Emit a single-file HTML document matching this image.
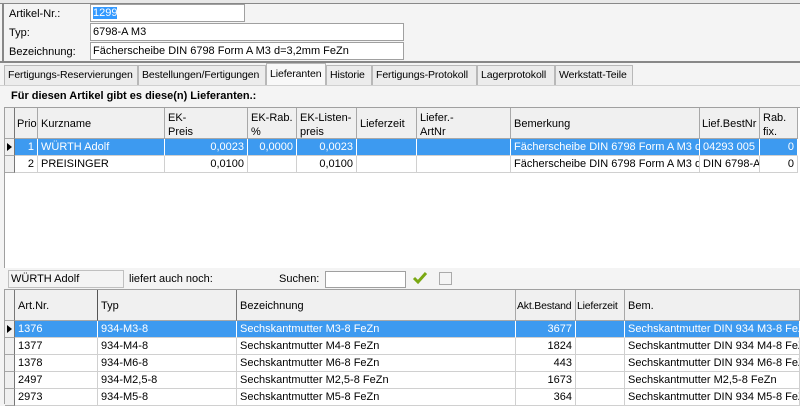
<!DOCTYPE html>
<html><head><meta charset="utf-8"><style>
*{box-sizing:border-box;margin:0;padding:0}
body{width:800px;height:404px;overflow:hidden;background:#f4f4f4;font-family:"Liberation Sans",sans-serif;font-size:11px;color:#000;position:relative}
.a{position:absolute;white-space:nowrap;overflow:hidden}
.inp{position:absolute;background:#fff;border:1px solid #a0a0a0;padding:0 3px;line-height:16px;white-space:nowrap;overflow:hidden}
.tab{position:absolute;top:65px;height:20px;border:1px solid #b8b8b8;border-bottom:none;background:#ececec;padding:3px 3px;white-space:nowrap;font-size:10.5px;letter-spacing:-0.1px;overflow:hidden}
.hd{position:absolute;background:#f0f0f0;border-right:1px solid #a8a8a8;border-bottom:1px solid #a8a8a8;padding:3px 3px;line-height:14px;white-space:nowrap;overflow:hidden}
.c{position:absolute;height:17px;border-right:1px solid #d0d0d0;border-bottom:1px solid #d0d0d0;padding:2px 3px;line-height:13px;white-space:nowrap;overflow:hidden;background:#fff}
.s{background:#3d9af0;color:#fff;border-right-color:#fff}
.r{text-align:right}
.ind{position:absolute;background:#f0f0f0;border-right:1px solid #777;border-bottom:1px solid #a8a8a8}
.tri{position:absolute;left:2px;top:4px;width:0;height:0;border-top:4px solid transparent;border-bottom:4px solid transparent;border-left:5px solid #000}
</style></head><body>
<div class="a" style="left:0;top:0;width:800px;height:3px;background:#e8e8e8"></div>
<div class="a" style="left:0;top:3px;width:800px;height:1px;background:#888"></div>
<div class="a" style="left:2px;top:4px;width:2px;height:58px;background:#888"></div>
<div class="a" style="left:9px;top:8px">Artikel-Nr.:</div>
<div class="inp" style="left:90px;top:4px;width:155px;height:18px;padding:0 2px"><span style="background:#3399ff;color:#fff">1299</span></div>
<div class="a" style="left:9px;top:27px">Typ:</div>
<div class="inp" style="left:90px;top:23px;width:314px;height:18px;padding:0 2px">6798-A M3</div>
<div class="a" style="left:9px;top:46px">Bezeichnung:</div>
<div class="inp" style="left:90px;top:42px;width:314px;height:18px;padding:0 2px">Fächerscheibe DIN 6798 Form A M3 d=3,2mm FeZn</div>
<div class="a" style="left:0;top:61px;width:800px;height:2px;background:#888"></div>

<div class="tab" style="left:4px;width:134px">Fertigungs-Reservierungen</div>
<div class="tab" style="left:138px;width:128px">Bestellungen/Fertigungen</div>
<div class="tab" style="left:266px;top:63px;height:23px;width:60px;background:#f8f8f8;padding-top:4px">Lieferanten</div>
<div class="tab" style="left:326px;width:46px">Historie</div>
<div class="tab" style="left:372px;width:105px">Fertigungs-Protokoll</div>
<div class="tab" style="left:477px;width:78px">Lagerprotokoll</div>
<div class="tab" style="left:555px;width:78px">Werkstatt-Teile</div>
<div class="a" style="left:0;top:85px;width:800px;height:1px;background:#d0d0d0"></div>

<div class="a" style="left:11px;top:90px;font-weight:bold">Für diesen Artikel gibt es diese(n) Lieferanten.:</div>

<div class="a" style="left:4px;top:107px;width:796px;height:161px;background:#fff;border-left:1px solid #a0a0a0;border-top:1px solid #a0a0a0"></div>
<div class="ind" style="left:5px;top:108px;width:10px;height:31px"></div>
<div class="hd" style="left:15px;top:108px;width:23px;height:31px;padding-top:9px;padding-left:2px">Prio</div>
<div class="hd" style="left:38px;top:108px;width:127px;height:31px;padding-top:9px">Kurzname</div>
<div class="hd" style="left:165px;top:108px;width:83px;height:31px">EK-<br>Preis</div>
<div class="hd" style="left:248px;top:108px;width:49px;height:31px">EK-Rab.<br>%</div>
<div class="hd" style="left:297px;top:108px;width:60px;height:31px">EK-Listen-<br>preis</div>
<div class="hd" style="left:357px;top:108px;width:60px;height:31px;padding-top:9px">Lieferzeit</div>
<div class="hd" style="left:417px;top:108px;width:94px;height:31px">Liefer.-<br>ArtNr</div>
<div class="hd" style="left:511px;top:108px;width:189px;height:31px;padding-top:9px">Bemerkung</div>
<div class="hd" style="left:700px;top:108px;width:60px;height:31px;padding-top:9px;padding-left:2px">Lief.BestNr</div>
<div class="hd" style="left:760px;top:108px;width:38px;height:31px">Rab.<br>fix.</div>

<div class="ind" style="left:5px;top:139px;width:10px;height:17px"><div class="tri"></div></div>
<div class="c s r" style="left:15px;top:139px;width:23px">1</div>
<div class="c s" style="left:38px;top:139px;width:127px">WÜRTH Adolf</div>
<div class="c s r" style="left:165px;top:139px;width:83px">0,0023</div>
<div class="c s r" style="left:248px;top:139px;width:49px">0,0000</div>
<div class="c s r" style="left:297px;top:139px;width:60px">0,0023</div>
<div class="c s" style="left:357px;top:139px;width:60px"></div>
<div class="c s" style="left:417px;top:139px;width:94px"></div>
<div class="c s" style="left:511px;top:139px;width:189px">Fächerscheibe DIN 6798 Form A M3 d=3,2mm</div>
<div class="c s" style="left:700px;top:139px;width:60px">04293 005</div>
<div class="c s r" style="left:760px;top:139px;width:38px">0</div>

<div class="ind" style="left:5px;top:156px;width:10px;height:17px"></div>
<div class="c r" style="left:15px;top:156px;width:23px">2</div>
<div class="c" style="left:38px;top:156px;width:127px">PREISINGER</div>
<div class="c r" style="left:165px;top:156px;width:83px">0,0100</div>
<div class="c r" style="left:248px;top:156px;width:49px"></div>
<div class="c r" style="left:297px;top:156px;width:60px">0,0100</div>
<div class="c" style="left:357px;top:156px;width:60px"></div>
<div class="c" style="left:417px;top:156px;width:94px"></div>
<div class="c" style="left:511px;top:156px;width:189px">Fächerscheibe DIN 6798 Form A M3 d=3,2mm</div>
<div class="c" style="left:700px;top:156px;width:60px">DIN 6798-A3</div>
<div class="c r" style="left:760px;top:156px;width:38px">0</div>

<div class="inp" style="left:8px;top:270px;width:116px;height:18px;padding:0 2px;background:#f4f4f4;border-color:#c0c0c0">WÜRTH Adolf</div>
<div class="a" style="left:129px;top:273px">liefert auch noch:</div>
<div class="a" style="left:279px;top:273px">Suchen:</div>
<div class="inp" style="left:325px;top:271px;width:81px;height:17px"></div>
<svg class="a" style="left:412px;top:271px" width="16" height="14" viewBox="0 0 16 14"><path d="M2 7 L6 11 L14 2" stroke="#7aa813" stroke-width="3" fill="none"/></svg>
<div class="a" style="left:439px;top:272px;width:13px;height:13px;border:1px solid #aaa;background:#f4f4f4"></div>

<div class="a" style="left:4px;top:289px;width:796px;height:115px;background:#fff;border-left:1px solid #a0a0a0;border-top:1px solid #a0a0a0"></div>
<div class="ind" style="left:5px;top:290px;width:10px;height:31px"></div>
<div class="hd" style="left:15px;top:290px;width:83px;height:31px;padding-top:9px;border-right-color:#555">Art.Nr.</div>
<div class="hd" style="left:98px;top:290px;width:139px;height:31px;padding-top:9px;border-right-color:#777">Typ</div>
<div class="hd" style="left:237px;top:290px;width:279px;height:31px;padding-top:9px">Bezeichnung</div>
<div class="hd" style="left:516px;top:290px;width:60px;height:31px;padding-top:9px;padding-left:1px;font-size:10.5px;letter-spacing:-0.2px">Akt.Bestand</div>
<div class="hd" style="left:576px;top:290px;width:49px;height:31px;padding-top:9px;padding-left:1px;font-size:10.5px;letter-spacing:-0.2px">Lieferzeit</div>
<div class="hd" style="left:625px;top:290px;width:175px;height:31px;padding-top:9px">Bem.</div>

<div class="ind" style="left:5px;top:321px;width:10px;height:17px"><div class="tri"></div></div>
<div class="c s" style="left:15px;top:321px;width:83px">1376</div>
<div class="c s" style="left:98px;top:321px;width:139px">934-M3-8</div>
<div class="c s" style="left:237px;top:321px;width:279px">Sechskantmutter M3-8 FeZn</div>
<div class="c s r" style="left:516px;top:321px;width:60px">3677</div>
<div class="c s" style="left:576px;top:321px;width:49px"></div>
<div class="c s" style="left:625px;top:321px;width:175px">Sechskantmutter DIN 934 M3-8 FeZn</div>

<div class="ind" style="left:5px;top:338px;width:10px;height:17px"></div>
<div class="c" style="left:15px;top:338px;width:83px">1377</div>
<div class="c" style="left:98px;top:338px;width:139px">934-M4-8</div>
<div class="c" style="left:237px;top:338px;width:279px">Sechskantmutter M4-8 FeZn</div>
<div class="c r" style="left:516px;top:338px;width:60px">1824</div>
<div class="c" style="left:576px;top:338px;width:49px"></div>
<div class="c" style="left:625px;top:338px;width:175px">Sechskantmutter DIN 934 M4-8 FeZn</div>

<div class="ind" style="left:5px;top:355px;width:10px;height:17px"></div>
<div class="c" style="left:15px;top:355px;width:83px">1378</div>
<div class="c" style="left:98px;top:355px;width:139px">934-M6-8</div>
<div class="c" style="left:237px;top:355px;width:279px">Sechskantmutter M6-8 FeZn</div>
<div class="c r" style="left:516px;top:355px;width:60px">443</div>
<div class="c" style="left:576px;top:355px;width:49px"></div>
<div class="c" style="left:625px;top:355px;width:175px">Sechskantmutter DIN 934 M6-8 FeZn</div>

<div class="ind" style="left:5px;top:372px;width:10px;height:17px"></div>
<div class="c" style="left:15px;top:372px;width:83px">2497</div>
<div class="c" style="left:98px;top:372px;width:139px">934-M2,5-8</div>
<div class="c" style="left:237px;top:372px;width:279px">Sechskantmutter M2,5-8 FeZn</div>
<div class="c r" style="left:516px;top:372px;width:60px">1673</div>
<div class="c" style="left:576px;top:372px;width:49px"></div>
<div class="c" style="left:625px;top:372px;width:175px">Sechskantmutter M2,5-8 FeZn</div>

<div class="ind" style="left:5px;top:389px;width:10px;height:17px"></div>
<div class="c" style="left:15px;top:389px;width:83px">2973</div>
<div class="c" style="left:98px;top:389px;width:139px">934-M5-8</div>
<div class="c" style="left:237px;top:389px;width:279px">Sechskantmutter M5-8 FeZn</div>
<div class="c r" style="left:516px;top:389px;width:60px">364</div>
<div class="c" style="left:576px;top:389px;width:49px"></div>
<div class="c" style="left:625px;top:389px;width:175px">Sechskantmutter DIN 934 M5-8 FeZn</div>
</body></html>
